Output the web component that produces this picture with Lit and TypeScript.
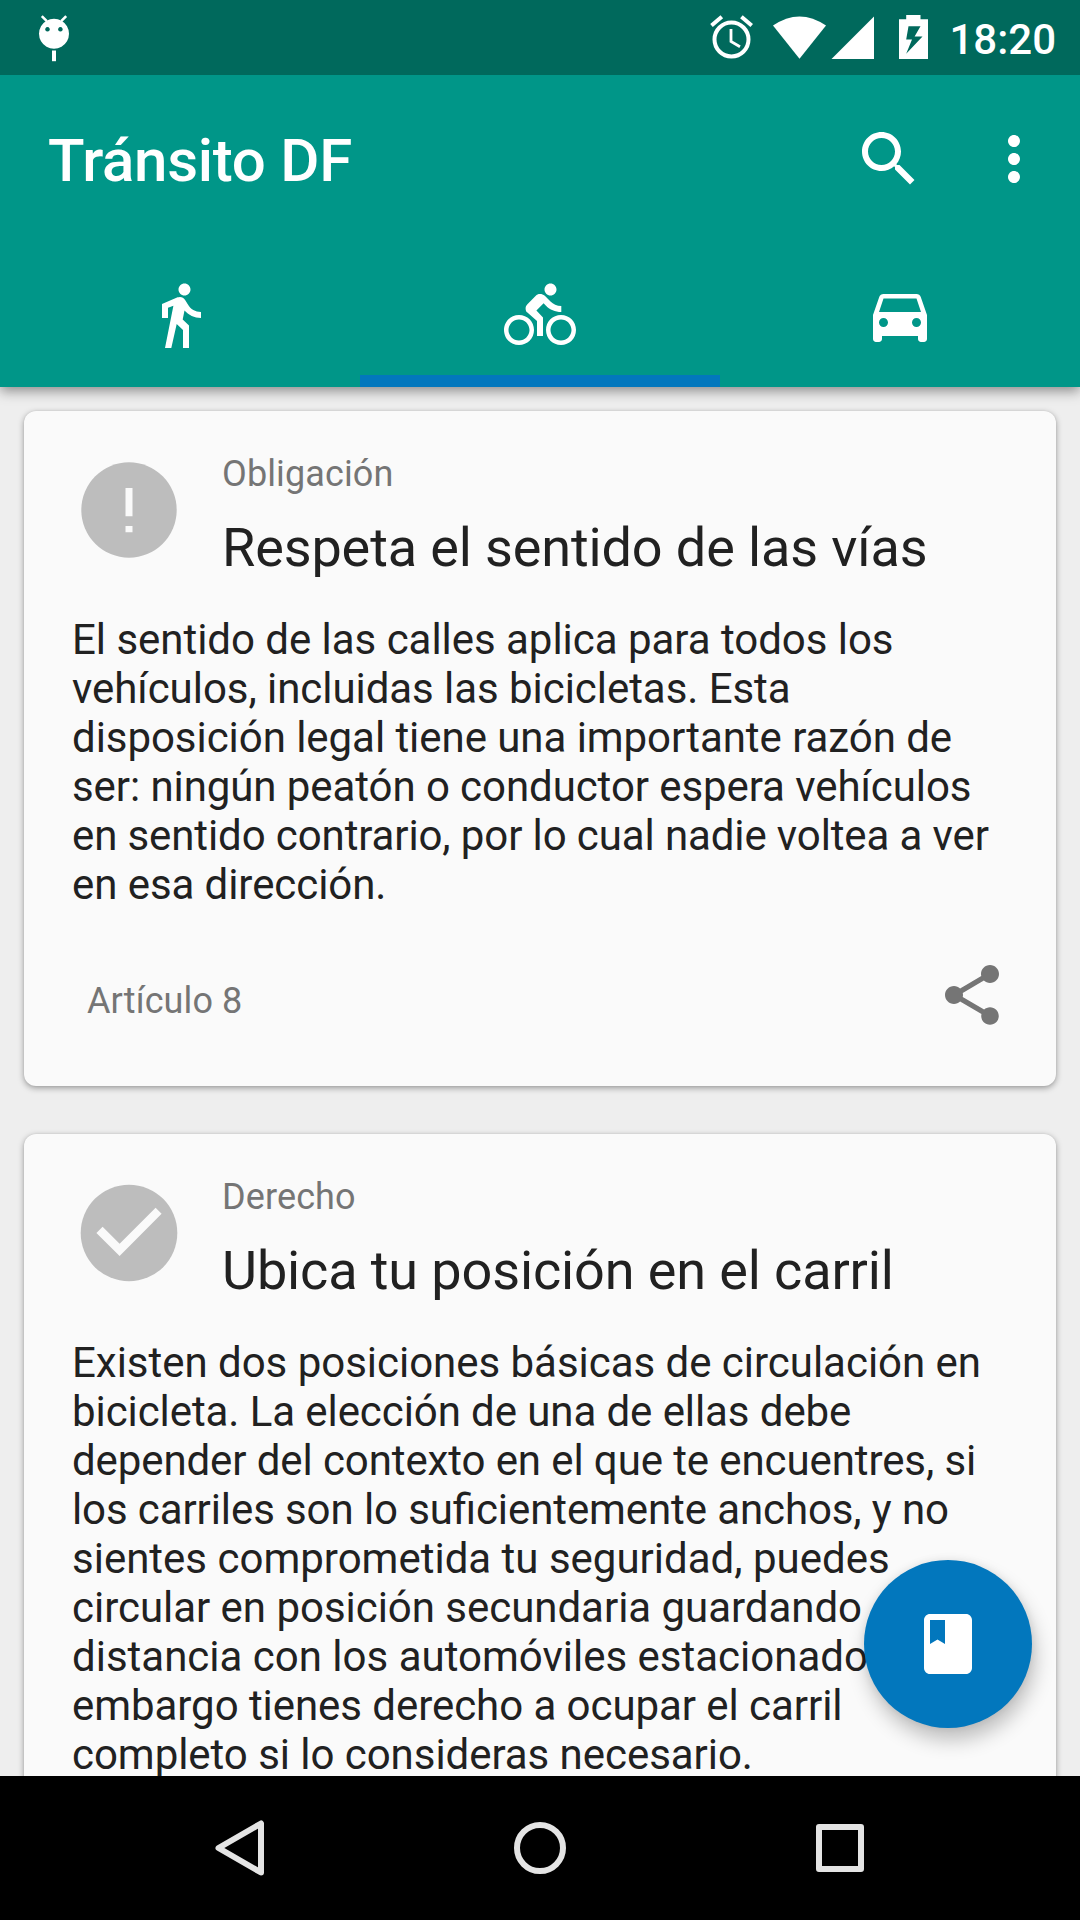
import { LitElement, html, css, svg } from "lit";
import { customElement, property } from "lit/decorators.js";
import { styleMap } from "lit/directives/style-map.js";

const ICONS = {
  walk: svg`<path d="M13.5 5.5c1.1 0 2-.9 2-2s-.9-2-2-2-2 .9-2 2 .9 2 2 2zM9.8 8.9L7 23h2.1l1.8-8 2.1 2v6h2v-7.5l-2.1-2 .6-3C14.8 12 16.8 13 19 13v-2c-1.9 0-3.5-1-4.3-2.4l-1-1.6c-.4-.6-1-1-1.7-1-.3 0-.5.1-.8.1L6 8.3V13h2V9.6l1.8-.7"/>`,
  bike: svg`<path d="M15.5 5.5c1.1 0 2-.9 2-2s-.9-2-2-2-2 .9-2 2 .9 2 2 2zM5 12c-2.8 0-5 2.2-5 5s2.2 5 5 5 5-2.2 5-5-2.2-5-5-5zm0 8.5c-1.9 0-3.5-1.6-3.5-3.5s1.6-3.5 3.5-3.5 3.5 1.6 3.5 3.5-1.6 3.5-3.5 3.5zm5.8-10l2.4-2.4.8.8c1.3 1.3 3 2.1 5.1 2.1V9c-1.5 0-2.7-.6-3.6-1.5l-1.9-1.9c-.5-.4-1-.6-1.6-.6s-1.1.2-1.4.6L7.8 8.4c-.4.4-.6.9-.6 1.4 0 .6.2 1.1.6 1.4L11 14v5h2v-6.2l-2.2-2.3zM19 12c-2.8 0-5 2.2-5 5s2.2 5 5 5 5-2.2 5-5-2.2-5-5-5zm0 8.5c-1.9 0-3.5-1.6-3.5-3.5s1.6-3.5 3.5-3.5 3.5 1.6 3.5 3.5-1.6 3.5-3.5 3.5z"/>`,
  car: svg`<path d="M18.92 6.01C18.72 5.42 18.16 5 17.5 5h-11c-.66 0-1.21.42-1.42 1.01L3 12v8c0 .55.45 1 1 1h1c.55 0 1-.45 1-1v-1h12v1c0 .55.45 1 1 1h1c.55 0 1-.45 1-1v-8l-2.08-5.99zM6.5 16c-.83 0-1.5-.67-1.5-1.5S5.67 13 6.5 13s1.5.67 1.5 1.5S7.33 16 6.5 16zm11 0c-.83 0-1.5-.67-1.5-1.5s.67-1.5 1.5-1.5 1.5.67 1.5 1.5-.67 1.5-1.5 1.5zM5 11l1.5-4.5h11L19 11H5z"/>`,
  search: svg`<path d="M15.5 14h-.79l-.28-.27C15.41 12.59 16 11.11 16 9.5 16 5.91 13.09 3 9.5 3S3 5.91 3 9.5 5.91 16 9.5 16c1.61 0 3.09-.59 4.23-1.57l.27.28v.79l5 4.99L20.49 19l-4.99-5zm-6 0C7.01 14 5 11.99 5 9.5S7.01 5 9.5 5 14 7.01 14 9.5 11.99 14 9.5 14z"/>`,
  more: svg`<path d="M12 8c1.1 0 2-.9 2-2s-.9-2-2-2-2 .9-2 2 .9 2 2 2zm0 2c-1.1 0-2 .9-2 2s.9 2 2 2 2-.9 2-2-.9-2-2-2zm0 6c-1.1 0-2 .9-2 2s.9 2 2 2 2-.9 2-2-.9-2-2-2z"/>`,
  share: svg`<path d="M18 16.08c-.76 0-1.44.3-1.96.77L8.91 12.7c.05-.23.09-.46.09-.7s-.04-.47-.09-.7l7.05-4.11c.54.5 1.25.81 2.04.81 1.66 0 3-1.34 3-3s-1.34-3-3-3-3 1.34-3 3c0 .24.04.47.09.7L8.04 9.81C7.5 9.31 6.79 9 6 9c-1.66 0-3 1.34-3 3s1.34 3 3 3c.79 0 1.5-.31 2.04-.81l7.12 4.16c-.05.21-.08.43-.08.65 0 1.61 1.31 2.92 2.92 2.92 1.61 0 2.92-1.31 2.92-2.92s-1.31-2.92-2.92-2.92z"/>`,
  book: svg`<path d="M18 2H6c-1.1 0-2 .9-2 2v16c0 1.1.9 2 2 2h12c1.1 0 2-.9 2-2V4c0-1.1-.9-2-2-2zM6 4h5v8l-2.5-1.5L6 12V4z"/>`,
};

const icon = (name: keyof typeof ICONS) =>
  html`<svg class="icon" viewBox="0 0 24 24">${ICONS[name]}</svg>`;

/** A line of body text and its tracking in pixels. */
type Line = [text: string, tracking: number];

interface Rule {
  kind: "duty" | "right";
  label: string;
  title: string;
  body: Line[];
  article?: string;
}

const RULES: Rule[] = [
  {
    kind: "duty",
    label: "Obligación",
    title: "Respeta el sentido de las vías",
    body: [
      ["El sentido de las calles aplica para todos los", -0.03],
      ["vehículos, incluidas las bicicletas. Esta", -0.05],
      ["disposición legal tiene una importante razón de", -0.05],
      ["ser: ningún peatón o conductor espera vehículos", -0.075],
      ["en sentido contrario, por lo cual nadie voltea a ver", -0.11],
      ["en esa dirección.", -0.07],
    ],
    article: "Artículo 8",
  },
  {
    kind: "right",
    label: "Derecho",
    title: "Ubica tu posición en el carril",
    body: [
      ["Existen dos posiciones básicas de circulación en", -0.025],
      ["bicicleta. La elección de una de ellas debe", -0.08],
      ["depender del contexto en el que te encuentres, si", -0.1],
      ["los carriles son lo suficientemente anchos, y no", -0.1],
      ["sientes comprometida tu seguridad, puedes", 0],
      ["circular en posición secundaria guardando", -0.03],
      ["distancia con los automóviles estacionados. Sin", 0],
      ["embargo tienes derecho a ocupar el carril", -0.055],
      ["completo si lo consideras necesario.", -0.045],
    ],
  },
];

@customElement("rule-card")
class RuleCard extends LitElement {
  @property({ attribute: false }) rule!: Rule;

  static styles = css`
    :host {
      display: block;
      flex: none;
      background: #fafafa;
      border-radius: 12px;
      padding: 42px 48px 55px;
      box-shadow: 0 2px 6px rgba(0, 0, 0, 0.36), 0 0 2px rgba(0, 0, 0, 0.08);
      color: #212121;
    }
    .head { display: flex; }
    .badge { width: 98px; height: 98px; margin: 8px 44px 0 8px; flex: none; }
    .label { font-size: 36px; line-height: 42px; color: #757575; letter-spacing: 0.12px; }
    .title { font-size: 54px; line-height: 63px; margin-top: 21px; white-space: nowrap; letter-spacing: -0.12px; }
    .body {
      font-size: 42px;
      line-height: 49px;
      margin-top: 36px;
      white-space: nowrap;
      font-feature-settings: "liga" 1;
    }
    .foot { display: flex; justify-content: space-between; margin-top: 50px; padding-left: 15px; }
    .article { font-size: 36px; line-height: 42px; color: #757575; margin-top: 21px; letter-spacing: 0.1px; }
    .icon { width: 72px; height: 72px; fill: #757575; display: block; }
  `;

  render() {
    const r = this.rule;
    return html`
      <div class="head">
        <svg class="badge" viewBox="-49 -49 98 98">
          ${r.kind === "duty"
            ? svg`<circle r="47.7" fill="#bdbdbd"/><path fill="#fafafa" d="M-3.5 -22h7v28.3h-7zM-3.5 15.9h7v6.4h-7z"/>`
            : svg`<circle r="48.3" fill="#bdbdbd"/><path fill="#fafafa" d="M-32.6 0L-26.4 -6.2L-9.4 10.8L26.6 -25.2L32.6 -19.2L-9.4 22.9z"/>`}
        </svg>
        <div>
          <div class="label">${r.label}</div>
          <div class="title">${r.title}</div>
        </div>
      </div>
      <div class="body">
        ${r.body.map(
          ([text, tracking]) =>
            html`<div style=${styleMap({ letterSpacing: `${tracking}px` })}>${text}</div>`
        )}
      </div>
      ${r.article
        ? html`<div class="foot"><span class="article">${r.article}</span>${icon("share")}</div>`
        : null}
    `;
  }
}

@customElement("app-root")
class AppRoot extends LitElement {
  static styles = css`
    :host {
      display: flex;
      flex-direction: column;
      position: relative;
      width: 1080px;
      height: 1920px;
      overflow: hidden;
      background: #eeeeee;
      font-family: Roboto, "Liberation Sans", sans-serif;
    }
    .icon { width: 72px; height: 72px; fill: #fff; display: block; }
    .status {
      flex: none;
      height: 75px;
      background: #00695c;
      display: flex;
      justify-content: space-between;
      color: #fff;
      z-index: 2;
    }
    .status svg { display: block; fill: #fff; }
    .status-right { display: flex; padding-right: 24px; }
    .time {
      width: 116px;
      text-align: right;
      font-size: 42px;
      font-weight: 500;
      line-height: 49px;
      margin-top: 15px;
    }
    .appbar {
      flex: none;
      background: #009688;
      box-shadow: 0 4px 12px rgba(0, 0, 0, 0.42);
      z-index: 1;
    }
    .toolbar { height: 168px; display: flex; align-items: center; padding: 0 30px 0 48px; }
    .name {
      flex: 1;
      margin: 4px 0 0;
      font-size: 60px;
      font-weight: 500;
      color: #fff;
      line-height: 70px;
      letter-spacing: -0.28px;
    }
    .toolbar .icon + .icon { margin-left: 53px; }
    .tabs { display: grid; grid-template-columns: repeat(3, 1fr); height: 144px; }
    .tab { display: flex; justify-content: center; align-items: center; }
    .tab.on { box-shadow: inset 0 -12px #0277bd; }
    .list {
      flex: 1;
      min-height: 0;
      overflow: hidden;
      display: flex;
      flex-direction: column;
      gap: 48px;
      padding: 24px 24px 0;
    }
    .fab {
      position: absolute;
      right: 48px;
      bottom: 192px;
      width: 168px;
      height: 168px;
      border-radius: 50%;
      background: #0277bd;
      display: flex;
      align-items: center;
      justify-content: center;
      box-shadow: 3px 12px 20px rgba(0, 0, 0, 0.24), 0 0 8px rgba(0, 0, 0, 0.08);
    }
    .nav {
      flex: none;
      height: 144px;
      background: #000;
      display: flex;
      justify-content: center;
      align-items: center;
      gap: 204px;
    }
    .nav svg { width: 96px; height: 96px; fill: none; stroke: #e4e4e4; stroke-width: 6; stroke-linejoin: round; }
  `;

  render() {
    return html`
      <div class="status">
        <svg width="110" height="75" viewBox="0 0 110 75">
          <path fill-rule="evenodd" d="M54 18.7a15 15 0 1 0 .01 0zM47.5 27a2.3 2.3 0 1 1-.01 0zM60.4 27a2.3 2.3 0 1 1-.01 0z"/>
          <path d="M41.8 16.2l5 5M66.2 16.2l-5 5" stroke="#fff" stroke-width="2.6"/>
          <path d="M52 50.5h4v10.7h-4z"/>
        </svg>
        <div class="status-right">
          <svg width="240" height="75" viewBox="700 0 240 75">
            <circle cx="731.5" cy="39.5" r="17" fill="none" stroke="#fff" stroke-width="4"/>
            <path d="M711.5 25.5l10.3-8.7M751.7 25.5l-10.3-8.7" fill="none" stroke="#fff" stroke-width="4"/>
            <path d="M731 29v12.5l9 5.2" fill="none" stroke="#fff" stroke-width="2.8"/>
            <path d="M773 25.5Q799.5 7.3 826 25.5L799.5 58.7z"/>
            <path d="M831.5 59L874 16.5V59z"/>
            <path fill-rule="evenodd" d="M899 19.3h7.2V15H920.5v4.3H928V59H899zM908.5 26.3L906.2 39.5H912L906.2 53.7L922.5 36.5H914.6L920.5 26.3z"/>
          </svg>
          <span class="time">18:20</span>
        </div>
      </div>
      <div class="appbar">
        <div class="toolbar">
          <h1 class="name">Tránsito DF</h1>
          ${icon("search")}${icon("more")}
        </div>
        <div class="tabs">
          <div class="tab">${icon("walk")}</div>
          <div class="tab on">${icon("bike")}</div>
          <div class="tab">${icon("car")}</div>
        </div>
      </div>
      <div class="list">${RULES.map((r) => html`<rule-card .rule=${r}></rule-card>`)}</div>
      <div class="fab">${icon("book")}</div>
      <div class="nav">
        <svg viewBox="192 1800 96 96"><path d="M218.5 1848L261 1823.5V1872.5z"/></svg>
        <svg viewBox="492 1800 96 96"><circle cx="540" cy="1848" r="23"/></svg>
        <svg viewBox="792 1800 96 96"><path d="M819 1827h42v42h-42z"/></svg>
      </div>
    `;
  }
}
